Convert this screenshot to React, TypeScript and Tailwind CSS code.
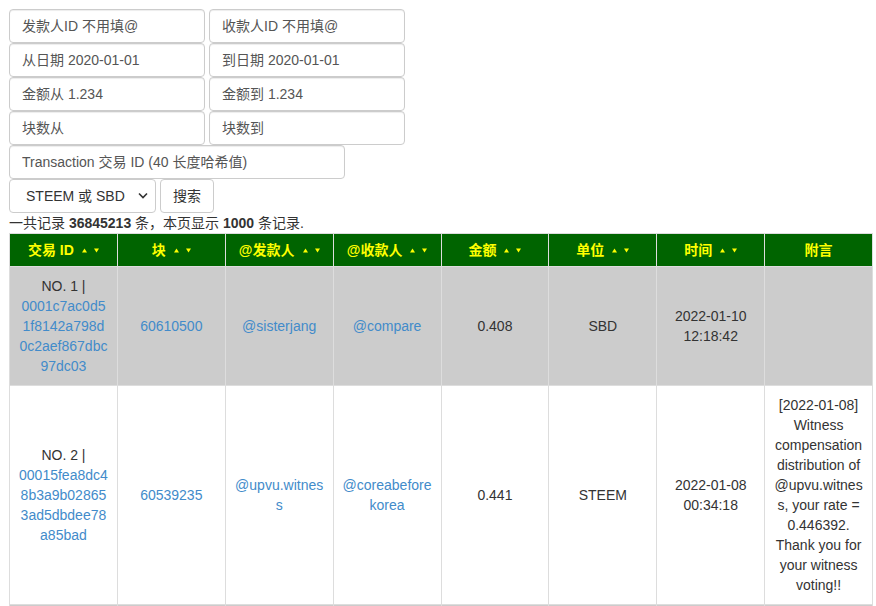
import React from "react";

type Row = {
  no: number;
  tx: string;
  block: string;
  from: string;
  to: string;
  amount: string;
  unit: string;
  date: string;
  time: string;
  memo?: string;
};

const rows: Row[] = [
  {
    no: 1,
    tx: "0001c7ac0d51f8142a798d0c2aef867dbc97dc03",
    block: "60610500",
    from: "@sisterjang",
    to: "@compare",
    amount: "0.408",
    unit: "SBD",
    date: "2022-01-10",
    time: "12:18:42"
  },
  {
    no: 2,
    tx: "00015fea8dc48b3a9b028653ad5dbdee78a85bad",
    block: "60539235",
    from: "@upvu.witness",
    to: "@coreabeforekorea",
    amount: "0.441",
    unit: "STEEM",
    date: "2022-01-08",
    time: "00:34:18",
    memo:
      "[2022-01-08] Witness compensation distribution of @upvu.witness, your rate = 0.446392. Thank you for your witness voting!!"
  },
  {
    no: 3,
    tx: "0000a13f5b2c7d9e4f8a6b3c1d2e5f7a9b8c4d6e",
    block: "60512877",
    from: "@steemcurator01",
    to: "@sisterjang",
    amount: "1.234",
    unit: "STEEM",
    date: "2022-01-07",
    time: "09:12:05"
  }
];

const columns = [
  { label: "交易 ID", sort: true },
  { label: "块", sort: true },
  { label: "@发款人", sort: true },
  { label: "@收款人", sort: true },
  { label: "金额", sort: true },
  { label: "单位", sort: true },
  { label: "时间", sort: true },
  { label: "附言", sort: false }
];

const inputClass =
  "h-[34px] rounded-[4px] border border-[#ccc] bg-white px-3 text-[14px] text-[#555] outline-none placeholder:text-[#555] shadow-[inset_0_1px_1px_rgba(0,0,0,0.075)]";

const cellClass = "border border-[#ddd] px-2 py-[9px] text-center align-middle";

function SortArrows() {
  return (
    <svg className="ml-[8px] inline-block" width="17" height="6" viewBox="0 0 17 6">
      <polygon points="0,5.5 2.5,1.5 5,5.5" fill="#ffff00" />
      <polygon points="12,1.5 17,1.5 14.5,5.5" fill="#ffff00" />
    </svg>
  );
}

export default function App() {
  return (
    <div
      className="bg-white pl-[9px] pt-[9px] text-[14px] leading-[20px] text-[#333]"
      style={{ fontFamily: '"Liberation Sans", Arial, "Noto Sans CJK SC", sans-serif' }}
    >
      <form className="flex flex-col">
        <div className="flex gap-[4px]">
          <input className={`${inputClass} w-[196px]`} placeholder="发款人ID 不用填@" />
          <input className={`${inputClass} w-[196px]`} placeholder="收款人ID 不用填@" />
        </div>
        <div className="flex gap-[4px]">
          <input className={`${inputClass} w-[196px]`} placeholder="从日期 2020-01-01" />
          <input className={`${inputClass} w-[196px]`} placeholder="到日期 2020-01-01" />
        </div>
        <div className="flex gap-[4px]">
          <input className={`${inputClass} w-[196px]`} placeholder="金额从 1.234" />
          <input className={`${inputClass} w-[196px]`} placeholder="金额到 1.234" />
        </div>
        <div className="flex gap-[4px]">
          <input className={`${inputClass} w-[196px]`} placeholder="块数从" />
          <input className={`${inputClass} w-[196px]`} placeholder="块数到" />
        </div>
        <div className="flex">
          <input
            className={`${inputClass} w-[336px]`}
            placeholder="Transaction 交易 ID (40 长度哈希值)"
          />
        </div>
        <div className="flex gap-[4px]">
          <div className="relative">
            <select
              className="h-[34px] w-[147px] appearance-none rounded-[4px] border border-[#ccc] bg-white pl-[16px] text-[14px] text-[#333] outline-none"
              defaultValue="both"
            >
              <option value="both">STEEM 或 SBD</option>
              <option value="steem">STEEM</option>
              <option value="sbd">SBD</option>
            </select>
            <svg
              className="pointer-events-none absolute right-[8px] top-[13px]"
              width="10"
              height="7"
              viewBox="0 0 10 7"
            >
              <path d="M1 1.5 L5 5.5 L9 1.5" fill="none" stroke="#333" strokeWidth="1.6" />
            </svg>
          </div>
          <button
            type="button"
            className="h-[34px] w-[54px] rounded-[4px] border border-[#ccc] bg-white text-[14px] text-[#333]"
          >
            搜索
          </button>
        </div>
      </form>

      <p>
        一共记录 <b>36845213</b> 条，本页显示 <b>1000</b> 条记录.
      </p>

      <table className="w-[864px] table-fixed border-collapse border border-[#ddd]">
        <thead>
          <tr className="bg-[#006400]">
            {columns.map((col) => (
              <th
                key={col.label}
                className="h-[33px] border border-[#ddd] px-2 py-[6px] text-center align-middle text-[14px] font-bold text-[#ffff00]"
              >
                <span className="inline-flex items-center">
                  {col.label}
                  {col.sort && <SortArrows />}
                </span>
              </th>
            ))}
          </tr>
        </thead>
        <tbody>
          {rows.map((row, i) => (
            <tr key={row.no} className={i % 2 === 0 ? "bg-[#ccc]" : "bg-white"}>
              <td className="border border-[#ddd] px-[9px] py-[9px] text-center align-middle break-words">
                NO. {row.no} | <a className="text-[#428bca]" href="#">{row.tx}</a>
              </td>
              <td className={`${cellClass} break-words`}>
                <a className="text-[#428bca]" href="#">{row.block}</a>
              </td>
              <td className={`${cellClass} break-words`}>
                <a className="text-[#428bca]" href="#">{row.from}</a>
              </td>
              <td className={`${cellClass} break-words`}>
                <a className="text-[#428bca]" href="#">{row.to}</a>
              </td>
              <td className={cellClass}>{row.amount}</td>
              <td className={cellClass}>{row.unit}</td>
              <td className={cellClass}>
                {row.date}
                <br />
                {row.time}
              </td>
              <td className={`${cellClass} break-words`}>{row.memo}</td>
            </tr>
          ))}
        </tbody>
      </table>
    </div>
  );
}
